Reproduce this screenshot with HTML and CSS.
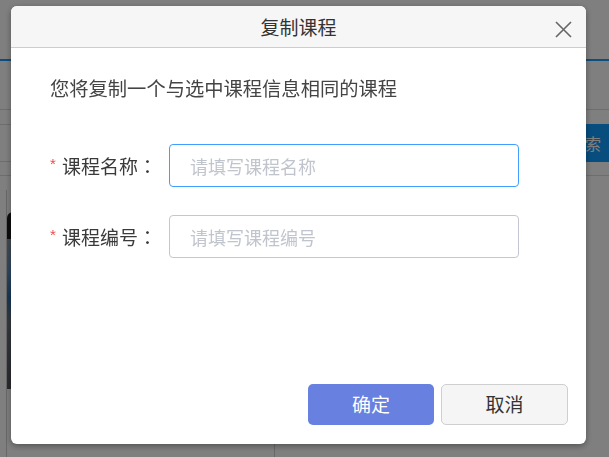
FILE: index.html
```html
<!DOCTYPE html>
<html lang="zh-CN">
<head>
    <meta charset="UTF-8">
    <meta name="viewport" content="width=device-width, initial-scale=1.0">
    <title>复制课程</title>
    <link rel="stylesheet" href="styles.css">
</head>
<body>
    <!-- Page behind the dialog -->
    <div class="page">
        <div class="topbar"></div>
        <div class="tabs"></div>
        <div class="search-row">
            <div class="search-box"></div>
            <button class="search-button">搜索</button>
        </div>
        <div class="divider"></div>
        <div class="cards">
            <div class="card">
                <div class="thumb"></div>
            </div>
        </div>
    </div>

    <!-- Copy course dialog -->
    <div class="mask">
        <div class="dialog">
            <div class="dialog-header">
                <span class="dialog-title">复制课程</span>
                <button class="dialog-close" aria-label="关闭">
                    <svg width="17" height="17" viewBox="0 0 17 17">
                        <path d="M1 1 L16 16 M16 1 L1 16" stroke="#666" stroke-width="1.6" fill="none"/>
                    </svg>
                </button>
            </div>
            <div class="dialog-body">
                <p class="dialog-tip">您将复制一个与选中课程信息相同的课程</p>
                <div class="form-row">
                    <label class="form-label"><span class="required">*</span>课程名称<span class="colon">：</span></label>
                    <input class="form-input is-focus" type="text" placeholder="请填写课程名称">
                </div>
                <div class="form-row">
                    <label class="form-label"><span class="required">*</span>课程编号<span class="colon">：</span></label>
                    <input class="form-input" type="text" placeholder="请填写课程编号">
                </div>
            </div>
            <div class="dialog-footer">
                <button class="btn btn-primary">确定</button>
                <button class="btn btn-default">取消</button>
            </div>
        </div>
    </div>
</body>
</html>
```

FILE: styles.css
```css
body {
    margin: 0;
    height: 457px;
    overflow: hidden;
    background-color: #fff;
    font-family: "Noto Sans CJK SC", "Noto Sans", sans-serif;
}
.page {
    width: 609px;
}
.topbar {
    height: 59px;
    border-bottom: 2px solid #1a9cff;
}
.tabs {
    height: 48px;
    border-bottom: 1px solid #dcdcdc;
}
.search-row {
    display: flex;
    margin-top: 14px;
    height: 38px;
}
.search-box {
    flex: 1;
    border-top: 1px solid #dcdcdc;
    border-bottom: 1px solid #dcdcdc;
}
.search-button {
    width: 56px;
    padding: 0 8px 0 0;
    border: none;
    background-color: #0e9cff;
    color: #fff;
    font-family: inherit;
    font-size: 16px;
    text-align: right;
}
.divider {
    margin-top: 13px;
    border-bottom: 1px solid #dcdcdc;
}
.cards {
    display: flex;
    padding: 14px 0 0 6px;
}
.card {
    width: 267px;
    height: 245px;
    border-left: 1px solid #d0d0d0;
    border-right: 1px solid #d0d0d0;
    padding-top: 22px;
}
.thumb {
    height: 177px;
    border-radius: 6px 6px 0 0;
    background: linear-gradient(to bottom, #1c1c1c 0, #1c1c1c 27px, #8a94a0 27px, #5c8fc4 60px, #2f6fb0 85px, #6a7482 110px, #50545c 177px);
}

/* dialog */
.mask {
    position: fixed;
    top: 0;
    left: 0;
    right: 0;
    bottom: 0;
    background-color: rgba(0, 0, 0, 0.5);
    padding: 6px 0 0 11px;
}
.dialog {
    width: 575px;
    height: 438px;
    display: flex;
    flex-direction: column;
    background-color: #fff;
    border-radius: 6px;
    box-shadow: 0 2px 6px rgba(0, 0, 0, 0.35);
    overflow: hidden;
}
.dialog-header {
    height: 41px;
    border-bottom: 1px solid #cdcdcd;
    background-color: #f6f6f6;
    display: flex;
    justify-content: center;
    align-items: center;
    position: relative;
}
.dialog-title {
    font-size: 19px;
    line-height: 41px;
    color: #333;
}
.dialog-close {
    position: absolute;
    top: 15px;
    right: 14px;
    width: 17px;
    height: 17px;
    padding: 0;
    border: none;
    background: none;
    display: flex;
}
.dialog-body {
    padding: 28px 0 0 39px;
}
.dialog-tip {
    margin: 0 0 44px;
    font-size: 19.3px;
    line-height: 24px;
    color: #444;
}
.form-row {
    display: flex;
    align-items: center;
    margin-bottom: 28px;
}
.form-label {
    display: flex;
    align-items: center;
    font-size: 19px;
    line-height: 24px;
    color: #3a3a3a;
    margin-right: 12px;
}
.colon {
    font-family: "Noto Sans CJK TC", sans-serif;
}
.required {
    width: 12px;
    margin-top: -3px;
    color: #f04848;
    font-family: "Liberation Sans", sans-serif;
    font-size: 15px;
}
.form-input {
    box-sizing: border-box;
    width: 350px;
    height: 43px;
    padding: 0 20px;
    border: 1px solid #c4c6d2;
    border-radius: 4px;
    outline: none;
    font-family: inherit;
    font-size: 18px;
    color: #333;
}
.form-input::placeholder {
    color: #c0c4cc;
}
.form-input.is-focus {
    border-color: #409eff;
}
.dialog-footer {
    margin-top: auto;
    display: flex;
    justify-content: flex-end;
    gap: 7px;
    padding: 0 18px 19px 0;
}
.btn {
    width: 126px;
    height: 41px;
    padding: 0 0 3px;
    border-radius: 5px;
    font-family: inherit;
    font-size: 19px;
    cursor: pointer;
}
.btn-primary {
    border: none;
    background-color: #6880e0;
    color: #fff;
}
.btn-default {
    width: 127px;
    border: 1px solid #cfcfcf;
    background-color: #f5f5f5;
    color: #333;
}
```
